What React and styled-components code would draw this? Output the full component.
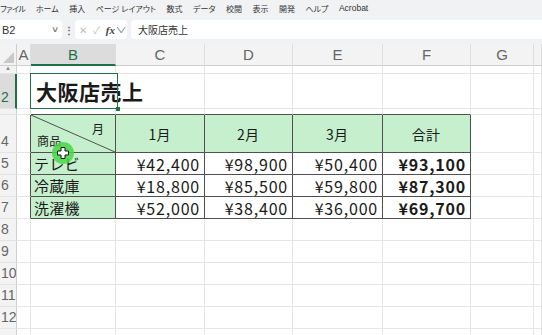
import React from 'react'
import styled, { createGlobalStyle, css } from 'styled-components'

const GlobalStyle = createGlobalStyle`
  html, body {
    margin: 0;
    padding: 0;
    background: #fff;
    overflow: hidden;
  }
  * { box-sizing: border-box; }
`

const Page = styled.div`
  position: relative;
  width: 542px;
  height: 335px;
  overflow: hidden;
  font-family: "Noto Sans CJK JP", "Noto Sans", sans-serif;
  color: #1a1a1a;
`

const MenuBar = styled.div`
  height: 16px;
  background: #f1f2f4;
  display: flex;
  align-items: center;
  gap: 10.5px;
  font-size: 8px;
  font-feature-settings: "palt";
  color: #333;
  white-space: nowrap;

  span:first-child {
    letter-spacing: -0.6px;
  }

  span:last-child {
    font-family: "Liberation Sans", sans-serif;
    font-size: 8.5px;
  }
`

const FormulaBar = styled.div`
  height: 28px;
  background: #f1f2f4;
  display: flex;
  align-items: center;
  padding: 4px 0 5px 0;
`

const Box = styled.div`
  height: 19px;
  background: #fff;
  border-radius: 4px;
  display: flex;
  align-items: center;
  font-size: 11px;
  color: #333;
`

const NameBox = styled(Box)`
  width: 62px;
  padding: 0 4px 0 2px;
  justify-content: space-between;
  border-radius: 0 4px 4px 0;
  font-family: "Liberation Sans", sans-serif;
`

const Chevron = styled.span`
  color: #777;
  font-size: 8px;
  line-height: 8px;
  transform: scaleX(1.4);
`

const Dots = styled.div`
  width: 13px;
  text-align: center;
  color: #666;
  font-size: 10px;
  font-weight: bold;
`

const FuncBox = styled(Box)`
  width: 52px;
  gap: 6px;
  padding-left: 4px;
  color: #c0c0c0;
  font-size: 10px;
`

const Fx = styled.span`
  font-family: "Liberation Serif", serif;
  font-style: italic;
  font-weight: bold;
  color: #444;
  font-size: 11px;
  margin-right: -4px;
`

const InputBox = styled(Box)`
  flex: 1;
  margin-left: 4px;
  padding-left: 7px;
  font-size: 10px;
  border-radius: 4px 0 0 4px;
`

const Sheet = styled.div`
  display: grid;
  grid-template-columns: 17px 14px 85px 89px 88px 90px 88px 63px 1fr;
  grid-template-rows: 22px 8px 35px 6px 38px repeat(9, 22px);
`

const HeadCell = styled.div`
  background: ${p => (p.$sel ? '#dcdcdc' : '#f3f3f3')};
  color: ${p => (p.$sel ? '#1e7145' : '#666')};
  font-family: "Liberation Sans", sans-serif;
  border-right: 1px solid #dedede;
  border-bottom: 1px solid #cfcfcf;
  display: flex;
  align-items: center;
  justify-content: center;
  font-size: 15px;
  overflow: hidden;
  ${p => p.$sel && css`border-bottom: 2px solid #1e7145;`}
`

const RowHead = styled.div`
  background: ${p => (p.$sel ? '#dcdcdc' : '#f3f3f3')};
  color: ${p => (p.$sel ? '#1e7145' : '#666')};
  font-family: "Liberation Sans", sans-serif;
  border-right: ${p => (p.$sel ? '2px solid #1e7145' : '1px solid #cfcfcf')};
  border-bottom: 1px solid #e3e3e3;
  display: flex;
  align-items: flex-end;
  justify-content: flex-start;
  padding: 0 0 2px 1px;
  font-size: 14px;
  line-height: 18px;
  overflow: hidden;
  white-space: nowrap;
`

const Corner = styled.div`
  background: #f3f3f3;
  border-right: 1px solid #cfcfcf;
  border-bottom: 1px solid #cfcfcf;
  position: relative;
  overflow: hidden;
`

const Tri = styled.div`
  position: absolute;
  right: 2px;
  bottom: 2px;
  width: 0;
  height: 0;
  border-left: 11px solid transparent;
  border-bottom: 11px solid #c9c9c9;
`

const TinyArrow = styled.span`
  font-size: 6px;
  color: #888;
  line-height: 6px;
  margin: 0 0 0 4px;
`

const Cell = styled.div`
  position: relative;
  background: ${p => (p.$fill ? '#c6efce' : '#fff')};
  border-right: 1px solid ${p => (p.$rb ? '#505050' : '#e5e5e5')};
  border-bottom: 1px solid ${p => (p.$bb ? '#505050' : '#e5e5e5')};
  display: flex;
  align-items: center;
  justify-content: ${p => p.$align || 'flex-start'};
  padding: 0 4px 0 3px;
  font-size: ${p => p.$size || 16}px;
  font-weight: ${p => (p.$bold ? 700 : 400)};
  white-space: nowrap;
  letter-spacing: ${p => (p.$num ? '0.8px' : '0.2px')};
`

const TitleCell = styled(Cell)`
  overflow: visible;
  z-index: 2;
  font-size: 21px;
  font-weight: 700;
  padding-left: 5px;
  background: transparent;
  border-right: none;
  letter-spacing: 0.5px;
`

const Selection = styled.div`
  position: absolute;
  left: -1px;
  top: -1px;
  right: -2px;
  bottom: -1px;
  border: 1.5px solid #217346;
  pointer-events: none;

  &::after {
    content: '';
    position: absolute;
    right: -3px;
    bottom: -3px;
    width: 4px;
    height: 4px;
    background: #217346;
  }
`

const DiagCell = styled(Cell)`
  padding: 0;
  display: block;
  font-size: 12px;

  svg {
    position: absolute;
    left: 0;
    top: 0;
  }
`

const DiagTop = styled.span`
  position: absolute;
  left: 61px;
  top: 5px;
`

const DiagBottom = styled.span`
  position: absolute;
  left: 6px;
  bottom: 3px;
`

const Cursor = styled.div`
  position: absolute;
  left: 52px;
  top: 142px;
  width: 22px;
  height: 22px;
  border-radius: 50%;
  background: rgba(70, 215, 70, 0.85);
  z-index: 5;

  svg {
    position: absolute;
    left: 5px;
    top: 5px;
  }
`

const COLS = ['A', 'B', 'C', 'D', 'E', 'F', 'G', '']
const ROWS = ['1', '2', '3', '4', '5', '6', '7', '8', '9', '10', '11', '12', '']

const DATA = {
  5: ['テレビ', '¥42,400', '¥98,900', '¥50,400', '¥93,100'],
  6: ['冷蔵庫', '¥18,800', '¥85,500', '¥59,800', '¥87,300'],
  7: ['洗濯機', '¥52,000', '¥38,400', '¥36,000', '¥69,700'],
}
const HEADS = ['1月', '2月', '3月', '合計']
const MENU = ['ファイル', 'ホーム', '挿入', 'ページ レイアウト', '数式', 'データ', '校閲', '表示', '開発', 'ヘルプ', 'Acrobat']

const inTable = (r, c) => r >= 4 && r <= 7 && c >= 1 && c <= 5

function renderCell(r, c) {
  const key = `${r}-${c}`
  const rb = inTable(r, c) || inTable(r, c + 1)
  const bb = inTable(r, c) || inTable(r + 1, c)

  if (r === 2 && c === 1) {
    return (
      <TitleCell key={key}>
        大阪店売上
        <Selection />
      </TitleCell>
    )
  }
  if (r === 4 && c === 1) {
    return (
      <DiagCell key={key} $fill $rb $bb>
        <svg width="85" height="38">
          <line x1="0" y1="0" x2="84" y2="37" stroke="#505050" strokeWidth="1" />
        </svg>
        <DiagTop>月</DiagTop>
        <DiagBottom>商品</DiagBottom>
      </DiagCell>
    )
  }
  if (r === 4 && c >= 2 && c <= 5) {
    return (
      <Cell key={key} $fill $rb $bb $align="center" $size={14}>
        {HEADS[c - 2]}
      </Cell>
    )
  }
  if (DATA[r] && c === 1) {
    return (
      <Cell key={key} $fill $rb $bb $size={15}>
        {DATA[r][0]}
      </Cell>
    )
  }
  if (DATA[r] && c >= 2 && c <= 5) {
    return (
      <Cell key={key} $rb $bb $num $align="flex-end" $bold={c === 5}>
        {DATA[r][c - 1]}
      </Cell>
    )
  }
  return <Cell key={key} $rb={rb} $bb={bb} />
}

function Cross() {
  return (
    <svg width="12" height="12" viewBox="0 0 12 12">
      <path
        d="M4 0.5h4v3.5h3.5v4h-3.5v3.5h-4v-3.5h-3.5v-4h3.5z"
        fill="#fff"
        stroke="#111"
        strokeWidth="1"
      />
    </svg>
  )
}

export default function App() {
  return (
    <Page>
      <GlobalStyle />
      <MenuBar>
        {MENU.map(m => (
          <span key={m}>{m}</span>
        ))}
      </MenuBar>
      <FormulaBar>
        <NameBox>
          <span>B2</span>
          <Chevron>∨</Chevron>
        </NameBox>
        <Dots>⋮</Dots>
        <FuncBox>
          <span>✕</span>
          <span>✓</span>
          <Fx>fx</Fx>
          <Chevron>∨</Chevron>
        </FuncBox>
        <InputBox>大阪店売上</InputBox>
      </FormulaBar>
      <Sheet>
        <Corner>
          <Tri />
        </Corner>
        {COLS.map(c => (
          <HeadCell key={c || 'h'} $sel={c === 'B'}>
            {c}
          </HeadCell>
        ))}
        {ROWS.map((rn, ri) => {
          const r = ri + 1
          return (
            <React.Fragment key={r}>
              <RowHead $sel={r === 2}>
                {r === 1 ? <TinyArrow>▲</TinyArrow> : r === 3 ? '' : rn}
              </RowHead>
              {COLS.map((_, ci) => renderCell(r, ci))}
            </React.Fragment>
          )
        })}
      </Sheet>
      <Cursor>
        <Cross />
      </Cursor>
    </Page>
  )
}
